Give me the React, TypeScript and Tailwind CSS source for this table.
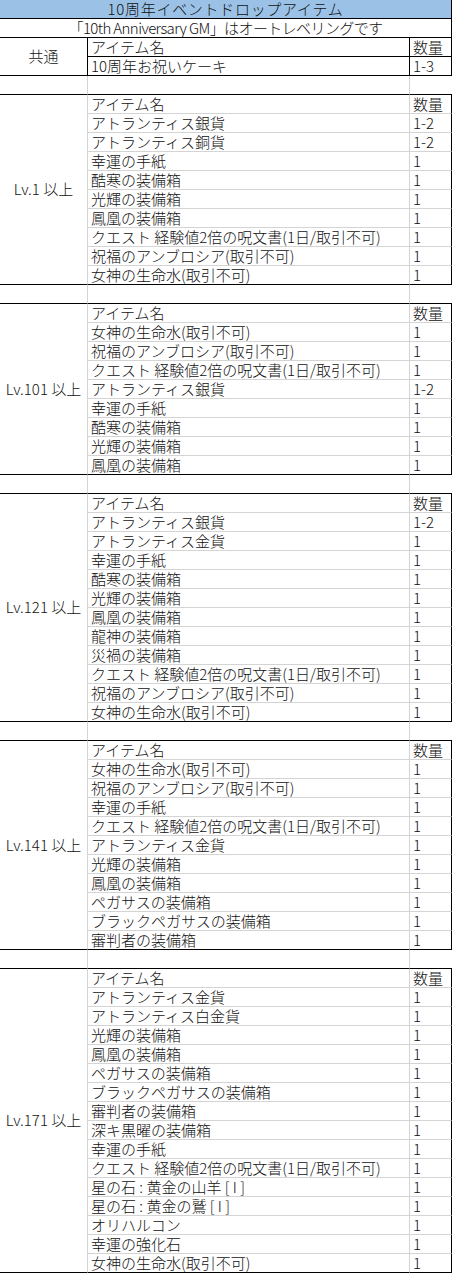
import React from 'react';

type Item = [string, string];

const sections: { label: string; items: Item[] }[] = [
  {
    label: 'Lv.1 以上',
    items: [
      ['アトランティス銀貨', '1-2'],
      ['アトランティス銅貨', '1-2'],
      ['幸運の手紙', '1'],
      ['酷寒の装備箱', '1'],
      ['光輝の装備箱', '1'],
      ['鳳凰の装備箱', '1'],
      ['クエスト 経験値2倍の呪文書(1日/取引不可)', '1'],
      ['祝福のアンブロシア(取引不可)', '1'],
      ['女神の生命水(取引不可)', '1'],
    ],
  },
  {
    label: 'Lv.101 以上',
    items: [
      ['女神の生命水(取引不可)', '1'],
      ['祝福のアンブロシア(取引不可)', '1'],
      ['クエスト 経験値2倍の呪文書(1日/取引不可)', '1'],
      ['アトランティス銀貨', '1-2'],
      ['幸運の手紙', '1'],
      ['酷寒の装備箱', '1'],
      ['光輝の装備箱', '1'],
      ['鳳凰の装備箱', '1'],
    ],
  },
  {
    label: 'Lv.121 以上',
    items: [
      ['アトランティス銀貨', '1-2'],
      ['アトランティス金貨', '1'],
      ['幸運の手紙', '1'],
      ['酷寒の装備箱', '1'],
      ['光輝の装備箱', '1'],
      ['鳳凰の装備箱', '1'],
      ['龍神の装備箱', '1'],
      ['災禍の装備箱', '1'],
      ['クエスト 経験値2倍の呪文書(1日/取引不可)', '1'],
      ['祝福のアンブロシア(取引不可)', '1'],
      ['女神の生命水(取引不可)', '1'],
    ],
  },
  {
    label: 'Lv.141 以上',
    items: [
      ['女神の生命水(取引不可)', '1'],
      ['祝福のアンブロシア(取引不可)', '1'],
      ['幸運の手紙', '1'],
      ['クエスト 経験値2倍の呪文書(1日/取引不可)', '1'],
      ['アトランティス金貨', '1'],
      ['光輝の装備箱', '1'],
      ['鳳凰の装備箱', '1'],
      ['ペガサスの装備箱', '1'],
      ['ブラックペガサスの装備箱', '1'],
      ['審判者の装備箱', '1'],
    ],
  },
  {
    label: 'Lv.171 以上',
    items: [
      ['アトランティス金貨', '1'],
      ['アトランティス白金貨', '1'],
      ['光輝の装備箱', '1'],
      ['鳳凰の装備箱', '1'],
      ['ペガサスの装備箱', '1'],
      ['ブラックペガサスの装備箱', '1'],
      ['審判者の装備箱', '1'],
      ['深キ黒曜の装備箱', '1'],
      ['幸運の手紙', '1'],
      ['クエスト 経験値2倍の呪文書(1日/取引不可)', '1'],
      ['星の石 : 黄金の山羊 [ I ]', '1'],
      ['星の石 : 黄金の鷲 [ I ]', '1'],
      ['オリハルコン', '1'],
      ['幸運の強化石', '1'],
      ['女神の生命水(取引不可)', '1'],
    ],
  },
];

const cell = 'h-[19px] p-0 leading-[18px] whitespace-nowrap';

const BlankRow = () => (
  <tr>
    <td className={`${cell} border-b border-r border-b-black border-r-[#d4d4d4]`} />
    <td className={`${cell} border-b border-r border-b-black border-r-[#d4d4d4]`} />
    <td className={`${cell} border-b border-b-black`} />
  </tr>
);

const Section = ({ label, items }: { label: string; items: Item[] }) => {
  const rows: Item[] = [['アイテム名', '数量'], ...items];
  return (
    <>
      {rows.map(([name, qty], i) => {
        const last = i === rows.length - 1;
        const bottom = last ? 'border-b-black' : 'border-b-[#d4d4d4]';
        return (
          <tr key={i}>
            {i === 0 && (
              <td
                rowSpan={rows.length}
                className="p-0 text-center align-middle border-b border-r border-b-black border-r-[#d4d4d4]"
              >
                {label}
              </td>
            )}
            <td className={`${cell} pl-[3px] border-b border-r ${bottom} border-r-[#d4d4d4]`}>{name}</td>
            <td className={`${cell} pl-[3px] border-b border-r ${bottom} border-r-black`}>{qty}</td>
          </tr>
        );
      })}
    </>
  );
};

export default function App() {
  return (
    <div className="w-[452px] bg-white text-[#111] text-[15px] font-light font-['Meiryo','Noto_Sans_CJK_JP',sans-serif]">
      <table className="w-[452px] table-fixed border-separate border-spacing-0">
        <colgroup>
          <col className="w-[88px]" />
          <col className="w-[322px]" />
          <col className="w-[42px]" />
        </colgroup>
        <tbody>
          <tr>
            <td
              colSpan={3}
              className={`${cell} text-center tracking-[0.7px] bg-[#9bc2e6] border-b border-r border-black`}
            >
              10周年イベントドロップアイテム
            </td>
          </tr>
          <tr>
            <td colSpan={3} className={`${cell} text-center tracking-[-0.6px] border-b border-r border-black`}>
              「10th Anniversary GM」はオートレベリングです
            </td>
          </tr>
          <tr>
            <td rowSpan={2} className="p-0 text-center align-middle border-b border-r border-black">
              共通
            </td>
            <td className={`${cell} pl-[3px] border-b border-r border-black`}>アイテム名</td>
            <td className={`${cell} pl-[3px] border-b border-r border-black`}>数量</td>
          </tr>
          <tr>
            <td className={`${cell} pl-[3px] border-b border-r border-black`}>10周年お祝いケーキ</td>
            <td className={`${cell} pl-[3px] border-b border-r border-black`}>1-3</td>
          </tr>
          {sections.map((s) => (
            <React.Fragment key={s.label}>
              <BlankRow />
              <Section label={s.label} items={s.items} />
            </React.Fragment>
          ))}
        </tbody>
      </table>
    </div>
  );
}
